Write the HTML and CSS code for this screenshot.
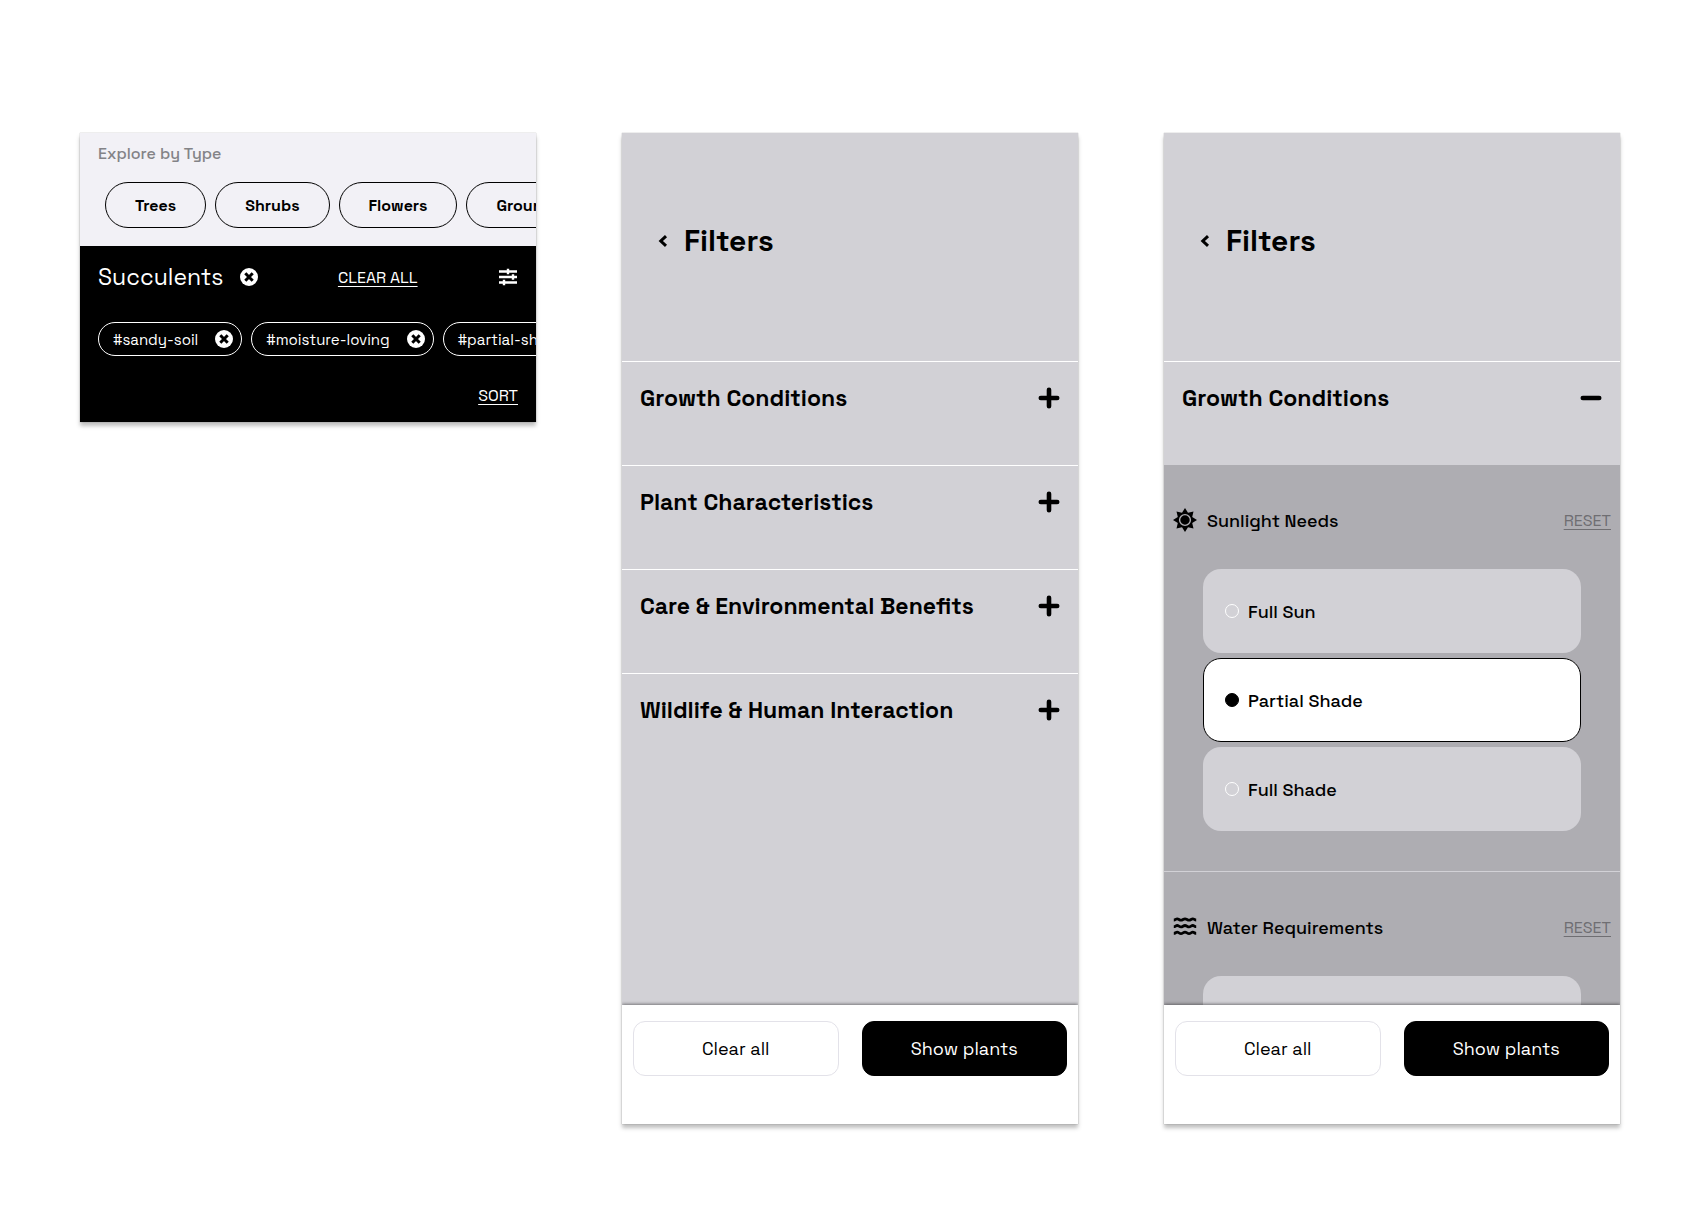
FILE: index.html
```html
<!DOCTYPE html>
<html lang="en">
<head>
<meta charset="utf-8">
<meta name="viewport" content="width=device-width, initial-scale=1">
<title>Plant filters</title>
<link rel="stylesheet" href="styles.css">
</head>
<body>
<svg class="sprite" aria-hidden="true">
  <symbol id="remove" viewBox="0 0 18 18"><circle cx="9" cy="9" r="9" fill="currentColor"/><path d="M5.300 5.300l7.400 7.400M12.700 5.300l-7.400 7.400" stroke="#000" stroke-width="3"/></symbol>
  <symbol id="plus" viewBox="0 0 22 22"><path d="M2.800 11h16.400M11 2.800v16.400" stroke="currentColor" stroke-width="4.600" stroke-linecap="round"/></symbol>
  <symbol id="minus" viewBox="0 0 22 22"><path d="M2.800 11h16.400" stroke="currentColor" stroke-width="4.600" stroke-linecap="round"/></symbol>
  <symbol id="back" viewBox="0 0 10 14"><path d="M8 2.200L2.800 7 8 11.800" fill="none" stroke="currentColor" stroke-width="3"/></symbol>
</svg>
<main class="board">

  <section class="screen results">
    <div class="explore">
      <h2 class="explore-title">Explore by Type</h2>
      <div class="types">
        <button class="type" type="button">Trees</button>
        <button class="type" type="button">Shrubs</button>
        <button class="type" type="button">Flowers</button>
        <button class="type" type="button">Groundcover</button>
      </div>
    </div>
    <div class="active">
      <div class="active-head">
        <h2 class="active-title">Succulents</h2>
        <button class="icon-button" type="button" aria-label="Remove Succulents"><svg class="remove"><use href="#remove"/></svg></button>
        <a class="link clear" href="#clear">CLEAR ALL</a>
        <button class="icon-button" type="button" aria-label="Open filters">
          <svg class="sliders" viewBox="0 0 20 18"><path d="M1 3.500h18M1 9h18M1 14.500h18" stroke="currentColor" stroke-width="2.400"/><path d="M10 .8v5.400M15 6.300v5.400M6 11.800v5.400" stroke="currentColor" stroke-width="2.400"/></svg>
        </button>
      </div>
      <div class="tags">
        <span class="tag">#sandy-soil <button class="icon-button" type="button" aria-label="Remove sandy-soil"><svg class="remove"><use href="#remove"/></svg></button></span>
        <span class="tag">#moisture-loving <button class="icon-button" type="button" aria-label="Remove moisture-loving"><svg class="remove"><use href="#remove"/></svg></button></span>
        <span class="tag">#partial-shade <button class="icon-button" type="button" aria-label="Remove partial-shade"><svg class="remove"><use href="#remove"/></svg></button></span>
      </div>
      <a class="link sort" href="#sort">SORT</a>
    </div>
  </section>

  <section class="screen phone">
    <header class="head">
      <button class="icon-button" type="button" aria-label="Back"><svg class="back"><use href="#back"/></svg></button>
      <h1 class="title">Filters</h1>
    </header>
    <div class="body">
      <button class="row" type="button">Growth Conditions <svg class="toggle"><use href="#plus"/></svg></button>
      <button class="row" type="button">Plant Characteristics <svg class="toggle"><use href="#plus"/></svg></button>
      <button class="row" type="button">Care &amp; Environmental Benefits <svg class="toggle"><use href="#plus"/></svg></button>
      <button class="row" type="button">Wildlife &amp; Human Interaction <svg class="toggle"><use href="#plus"/></svg></button>
    </div>
    <footer class="foot">
      <button class="action" type="button">Clear all</button>
      <button class="action primary" type="button">Show plants</button>
    </footer>
  </section>

  <section class="screen phone">
    <header class="head">
      <button class="icon-button" type="button" aria-label="Back"><svg class="back"><use href="#back"/></svg></button>
      <h1 class="title">Filters</h1>
    </header>
    <div class="body">
      <button class="row" type="button" aria-expanded="true">Growth Conditions <svg class="toggle"><use href="#minus"/></svg></button>
      <section class="group">
        <div class="group-head">
          <svg class="group-icon" viewBox="0 0 24 24"><path d="M12 0l3 4.800 5.500-1.300-1.300 5.500L24 12l-4.800 3 1.300 5.500-5.500-1.300L12 24l-3-4.800-5.500 1.300L4.800 15 0 12l4.800-3-1.300-5.500L9 4.800z" fill="currentColor"/><circle cx="12" cy="12" r="5.400" fill="currentColor" stroke="#aeadb2" stroke-width="1.400"/></svg>
          <h2 class="group-title">Sunlight Needs</h2>
          <a class="link reset" href="#reset-sun">RESET</a>
        </div>
        <div class="options">
          <label class="option"><input class="radio" type="radio" name="sun"> Full Sun</label>
          <label class="option"><input class="radio" type="radio" name="sun" checked> Partial Shade</label>
          <label class="option"><input class="radio" type="radio" name="sun"> Full Shade</label>
        </div>
      </section>
      <section class="group">
        <div class="group-head">
          <svg class="group-icon" viewBox="0 0 24 24"><path d="M.8 5c1.600 0 2-1.200 3.400-1.200S6.400 5.200 8 5.200s2.400-1.400 4-1.400 2.400 1.400 4 1.400 2.400-1.400 3.800-1.400S21.600 5 23.200 5M.8 11.700c1.600 0 2-1.200 3.400-1.200s2.200 1.400 3.800 1.400 2.400-1.400 4-1.400 2.400 1.400 4 1.400 2.400-1.400 3.800-1.400 1.800 1.200 3.400 1.200M.8 18.400c1.600 0 2-1.200 3.400-1.200s2.200 1.400 3.800 1.400 2.400-1.400 4-1.400 2.400 1.400 4 1.400 2.400-1.400 3.800-1.400 1.800 1.200 3.400 1.200" fill="none" stroke="currentColor" stroke-width="2.800"/></svg>
          <h2 class="group-title">Water Requirements</h2>
          <a class="link reset" href="#reset-water">RESET</a>
        </div>
        <div class="options">
          <div class="option"></div>
        </div>
      </section>
    </div>
    <footer class="foot">
      <button class="action" type="button">Clear all</button>
      <button class="action primary" type="button">Show plants</button>
    </footer>
  </section>
</main>
</body>
</html>
```
FILE: styles.css
```css
* { box-sizing: border-box; }
body {
  margin: 0;
  background: #fff;
  color: #000;
  font-family: "Space Grotesk", Inter, sans-serif;
}
h1, h2 { margin: 0; font-weight: 500; }
button { font: inherit; color: inherit; }
svg { flex: none; display: block; }
.sprite { position: absolute; width: 0; height: 0; }

.board {
  display: grid;
  grid-template-columns: repeat(3, minmax(0, 1fr));
  gap: 86px;
  align-items: start;
  padding: 133px 80px;
}
.screen {
  display: flex;
  flex-direction: column;
  overflow: hidden;
  box-shadow: 0 4px 4px #00000040, 0 0 1px #00000060;
}
.icon-button {
  display: flex;
  padding: 0;
  border: 0;
  background: none;
  cursor: pointer;
}
.link { color: inherit; font-size: 16px; text-underline-offset: 3px; text-decoration-thickness: 1px; }

/* Results header */
.explore { padding: 11px 0 18px 18px; background: #f2f1f6; }
.explore-title { color: #838387; font-size: 16px; line-height: 20px; }
.types { display: flex; gap: 9px; padding: 18px 0 0 7px; }
.type {
  flex: none;
  height: 46px;
  padding: 0 29px;
  border: 1px solid #000;
  border-radius: 23px;
  background: none;
  font-size: 16px;
  font-weight: 700;
}
.active { padding: 15px 18px 14px; background: #000; color: #fff; }
.active-head { display: flex; align-items: center; height: 32px; }
.active-title { margin-right: 16px; font-size: 23px; font-weight: 400; }
.remove { width: 18px; height: 18px; }
.clear { margin: 0 auto; }
.sliders { width: 20px; height: 18px; }
.tags { display: flex; gap: 9px; padding: 29px 0 28px; }
.tag {
  display: flex;
  flex: none;
  align-items: center;
  gap: 17px;
  height: 34px;
  padding: 0 8px 0 14px;
  border: 1px solid #fff;
  border-radius: 17px;
  font-size: 15px;
}
.sort { display: block; text-align: right; line-height: 24px; }

/* Filter screens */
.phone { aspect-ratio: 23 / 50; background: #d2d1d6; }
.head {
  display: flex;
  flex: none;
  align-items: center;
  gap: 16px;
  height: 228px;
  padding: 0 36px 12px;
}
.back { width: 10px; height: 14px; }
.title { font-size: 30px; line-height: 36px; font-weight: 600; }
.body { flex: 1; min-height: 0; overflow: hidden; }
.row {
  display: flex;
  align-items: center;
  justify-content: space-between;
  width: 100%;
  height: 104px;
  padding: 0 18px 31px;
  border: 0;
  border-top: 1px solid #fff;
  background: none;
  font-size: 23px;
  font-weight: 600;
  text-align: left;
}
.toggle { width: 22px; height: 22px; }
.group { padding: 37px 9px 40px; background: #aeadb2; }
.group + .group { border-top: 1px solid #d2d1d6; }
.group-head { display: flex; align-items: center; gap: 10px; height: 36px; }
.group-icon { width: 24px; height: 24px; }
.group-title { font-size: 18px; }
.reset { margin-left: auto; color: #6f6e72; }
.options { display: grid; gap: 5px; padding: 31px 30px 0; }
.option {
  display: flex;
  align-items: center;
  gap: 9px;
  height: 84px;
  padding: 0 21px;
  border: 1px solid transparent;
  border-radius: 18px;
  background: #d2d1d6 border-box;
  font-size: 18px;
  font-weight: 500;
}
.option:has(:checked) { border-color: #000; background: #fff; }
.radio {
  appearance: none;
  width: 14px;
  height: 14px;
  margin: 0;
  border: 1px solid #fff;
  border-radius: 50%;
}
.radio:checked { border-color: #000; background: #000; }
.foot {
  position: relative;
  display: flex;
  flex: none;
  gap: 23px;
  padding: 16px 11px 48px;
  background: #fff;
  box-shadow: 0 -1px 3px #00000070;
}
.action {
  flex: 1;
  height: 55px;
  border: 1px solid #e3e2e9;
  border-radius: 12px;
  background: #fff;
  font-size: 18px;
}
.primary { border-color: #000; background: #000; color: #fff; }
```
